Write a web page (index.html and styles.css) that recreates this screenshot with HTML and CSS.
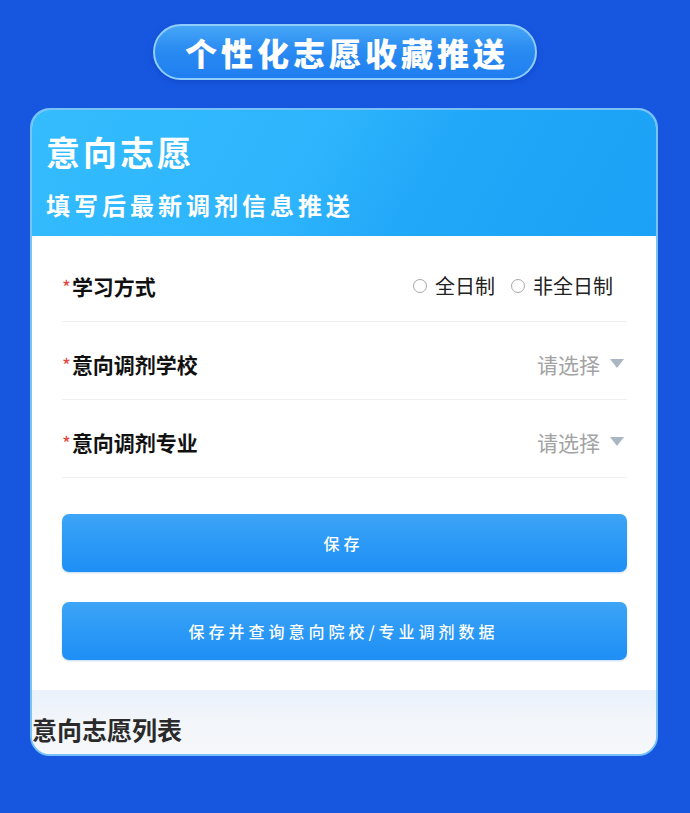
FILE: index.html
```html
<!DOCTYPE html>
<html lang="zh-CN">
<head>
<meta charset="utf-8">
<title>意向志愿</title>
<link rel="stylesheet" href="styles.css">
</head>
<body>
<div class="page">
  <div class="pill-wrap">
    <div class="pill">个性化志愿收藏推送</div>
  </div>
  <div class="card">
    <div class="card-head">
      <div class="head-title">意向志愿</div>
      <div class="head-sub">填写后最新调剂信息推送</div>
    </div>
    <div class="panel">
      <div class="row">
        <div class="label"><span class="req">*</span>学习方式</div>
        <div class="radios">
          <span class="radio"><span class="dot"></span>全日制</span>
          <span class="radio"><span class="dot"></span>非全日制</span>
        </div>
      </div>
      <div class="row">
        <div class="label"><span class="req">*</span>意向调剂学校</div>
        <div class="select">请选择<span class="caret"></span></div>
      </div>
      <div class="row">
        <div class="label"><span class="req">*</span>意向调剂专业</div>
        <div class="select">请选择<span class="caret"></span></div>
      </div>
      <div class="buttons">
        <button class="btn">保存</button>
        <button class="btn">保存并查询意向院校/专业调剂数据</button>
      </div>
    </div>
    <div class="list-area">
      <div class="list-title">意向志愿列表</div>
    </div>
  </div>
</div>
</body>
</html>
```

FILE: styles.css
```css
html, body {
  margin: 0;
  padding: 0;
}
body {
  background: #1757e0;
  font-family: "Noto Sans CJK SC", "Noto Sans", sans-serif;
  width: 690px;
  height: 813px;
  overflow: hidden;
}
.page {
  padding-top: 24px;
}
.pill-wrap {
  display: flex;
  justify-content: center;
}
.pill {
  width: 376px;
  height: 52px;
  border: 2px solid #8fcdff;
  border-radius: 30px;
  background: linear-gradient(180deg, #46a6f7 0%, #2a8bf2 45%, #1f7ef0 100%);
  color: #fff;
  font-size: 32px;
  font-weight: 900;
  letter-spacing: 4px;
  display: flex;
  align-items: center;
  justify-content: center;
  line-height: 1;
  padding-left: 4px;
  box-shadow: 0 2px 6px rgba(10, 50, 160, 0.35);
}
.card {
  margin: 28px 0 0 30px;
  width: 624px;
  border: 2px solid #78c2f8;
  border-radius: 20px;
  overflow: hidden;
  background: #f4f7fb;
}
.card-head {
  height: 126px;
  box-sizing: border-box;
  padding: 21px 0 0 14px;
  background: linear-gradient(120deg, #34bcfe 0%, #2db4fc 45%, #22a8f8 62%, #1ba1f6 100%);
  color: #fff;
}
.head-title {
  font-size: 34px;
  font-weight: 700;
  line-height: 42px;
  letter-spacing: 3px;
}
.head-sub {
  margin-top: 16px;
  font-size: 24px;
  font-weight: 700;
  line-height: 32px;
  letter-spacing: 4px;
}
.panel {
  background: #fff;
  border-radius: 6px 6px 0 0;
  padding: 8px 29px 30px 30px;
}
.row {
  height: 78px;
  box-sizing: border-box;
  padding-top: 6px;
  border-bottom: 1px solid #eef0f3;
  display: flex;
  align-items: center;
  justify-content: space-between;
}
.label {
  font-size: 21px;
  font-weight: 700;
  color: #111;
}
.req {
  color: #e2483d;
  font-size: 19px;
  font-weight: 400;
  margin-right: 1px;
}
.radios {
  display: flex;
  gap: 16px;
  padding-right: 14px;
}
.radio {
  display: flex;
  align-items: center;
  gap: 8px;
  font-size: 20px;
  color: #222;
}
.dot {
  width: 12px;
  height: 12px;
  border: 1.5px solid #a8a8a8;
  border-radius: 50%;
}
.select {
  display: flex;
  align-items: center;
  gap: 10px;
  font-size: 21px;
  color: #a3a3a3;
  padding-right: 3px;
}
.caret {
  width: 0;
  height: 0;
  border-left: 7px solid transparent;
  border-right: 7px solid transparent;
  border-top: 9px solid #aab6c2;
}
.buttons {
  margin-top: 36px;
  display: flex;
  flex-direction: column;
  gap: 30px;
}
.btn {
  height: 58px;
  border: none;
  border-radius: 7px;
  background: linear-gradient(180deg, #3ea5f6 0%, #2b99f6 50%, #1f8ff5 100%);
  color: #fff;
  font-family: "Noto Sans CJK SC", sans-serif;
  font-size: 16px;
  font-weight: 500;
  letter-spacing: 4px;
  padding-left: 4px;
  box-shadow: 0 1px 2px rgba(20, 100, 200, 0.25);
}
.list-area {
  height: 64px;
  box-sizing: border-box;
  padding-top: 23px;
  background: linear-gradient(180deg, #e9f1fc 0%, #f3f6fa 50%, #f5f7fa 100%);
}
.list-title {
  font-size: 25px;
  font-weight: 700;
  line-height: 32px;
  color: #2a2a2a;
}
```
